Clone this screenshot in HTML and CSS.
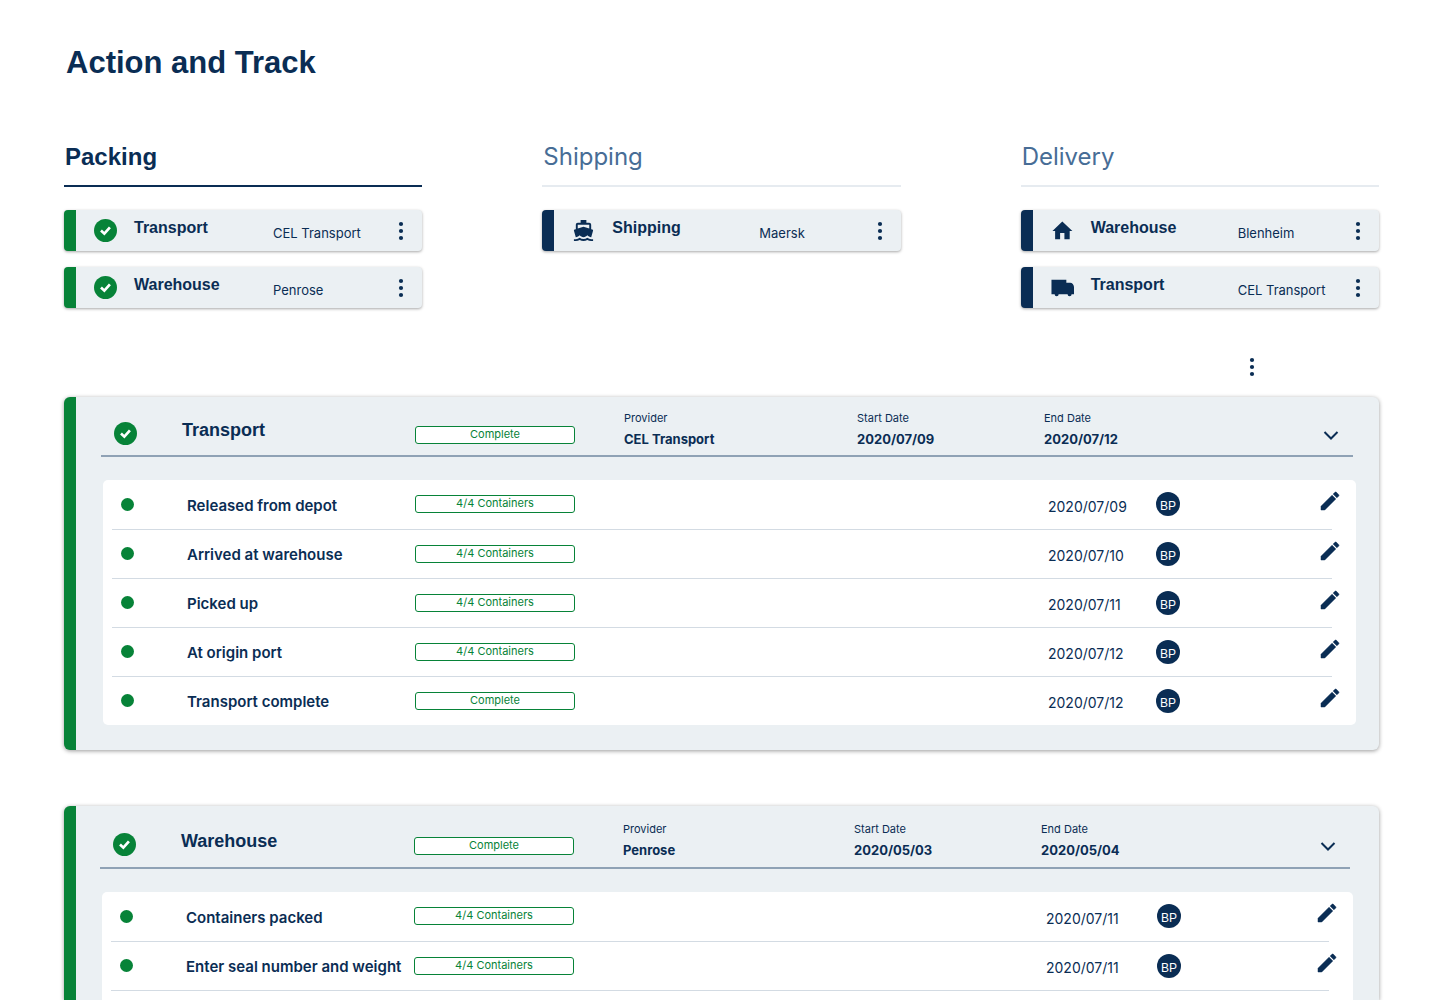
FILE: index.html
```html
<!DOCTYPE html>
<html lang="en">
<head>
  <meta charset="UTF-8" />
  <meta name="viewport" content="width=device-width, initial-scale=1.0"/>
  <title>Action and Track</title>
  <link rel="stylesheet" href="styles.css">
</head>
<body>

  <!-- icons -->
  <svg class="sprite" aria-hidden="true">
    <symbol id="check" viewBox="0 0 24 24">
      <circle cx="12" cy="12" r="12" fill="#078338"/>
      <path d="M7.3 12l3.5 3.3 5.8-6.6" fill="none" stroke="#fff" stroke-width="2.8"/>
    </symbol>
    <symbol id="dots" viewBox="0 0 6 20">
      <circle cx="3" cy="3" r="2.1"/><circle cx="3" cy="10" r="2.1"/><circle cx="3" cy="17" r="2.1"/>
    </symbol>
    <symbol id="boat" viewBox="0 0 24 24">
      <path d="M20 21c-1.39 0-2.78-.47-4-1.32-2.44 1.71-5.56 1.71-8 0C6.78 20.53 5.39 21 4 21H2v2h2c1.38 0 2.74-.35 4-.99 2.52 1.29 5.48 1.29 8 0 1.26.65 2.62.99 4 .99h2v-2h-2zM3.95 19H4c1.6 0 3.02-.88 4-2 .98 1.12 2.4 2 4 2s3.02-.88 4-2c.98 1.12 2.4 2 4 2h.05l1.89-6.68c.08-.26.06-.54-.06-.78s-.34-.42-.6-.5L20 10.62V6c0-1.1-.9-2-2-2h-3V1H9v3H6c-1.1 0-2 .9-2 2v4.62l-1.29.42c-.26.08-.48.26-.6.5s-.15.52-.06.78L3.95 19zM6 6h12v3.97L12 8 6 9.97V6z"/>
    </symbol>
    <symbol id="home" viewBox="0 0 24 24">
      <path d="M9.5 21v-6.5H14V21h5.5v-8.5h2.8L11.8 2.5 1.5 12.500h2.8V21z"/>
    </symbol>
    <symbol id="truck" viewBox="0 0 24 24">
      <path d="M.5 4H16v3h4c2 0 4 2 4 4.5V19h-2.5a2 2 0 0 1-4.200 0H8a2 2 0 0 1-4.200 0H.5z"/>
    </symbol>
    <symbol id="pen" viewBox="0 0 24 24">
      <path d="M3 17.25V21h3.75L17.81 9.94l-3.75-3.75L3 17.25zM20.71 7.04c.39-.39.39-1.02 0-1.41l-2.34-2.34c-.39-.39-1.02-.39-1.41 0l-1.83 1.83 3.75 3.75 1.83-1.83z" stroke="#0a2d54" stroke-width=".5"/>
    </symbol>
    <symbol id="chevron" viewBox="0 0 16 16">
      <path d="M1.5 5L8 11.500 14.500 5" fill="none" stroke="#0a2d54" stroke-width="2"/>
    </symbol>
  </svg>

  <h1>Action and Track</h1>

  <div class="phases">
    <section class="phase active">
      <h2>Packing</h2>
      <div class="card done">
        <svg class="icon"><use href="#check"/></svg>
        <h3>Transport</h3>
        <span class="company">CEL Transport</span>
        <button class="more" aria-label="More"><svg><use href="#dots"/></svg></button>
      </div>
      <div class="card done">
        <svg class="icon"><use href="#check"/></svg>
        <h3>Warehouse</h3>
        <span class="company">Penrose</span>
        <button class="more" aria-label="More"><svg><use href="#dots"/></svg></button>
      </div>
    </section>

    <section class="phase">
      <h2>Shipping</h2>
      <div class="card">
        <svg class="icon"><use href="#boat"/></svg>
        <h3>Shipping</h3>
        <span class="company">Maersk</span>
        <button class="more" aria-label="More"><svg><use href="#dots"/></svg></button>
      </div>
    </section>

    <section class="phase">
      <h2>Delivery</h2>
      <div class="card">
        <svg class="icon"><use href="#home"/></svg>
        <h3>Warehouse</h3>
        <span class="company">Blenheim</span>
        <button class="more" aria-label="More"><svg><use href="#dots"/></svg></button>
      </div>
      <div class="card">
        <svg class="icon"><use href="#truck"/></svg>
        <h3>Transport</h3>
        <span class="company">CEL Transport</span>
        <button class="more" aria-label="More"><svg><use href="#dots"/></svg></button>
      </div>
    </section>
  </div>

  <div class="toolbar">
    <button class="more" aria-label="More"><svg><use href="#dots"/></svg></button>
  </div>

  <section class="panel">
    <div class="panel-head">
      <svg class="icon"><use href="#check"/></svg>
      <h2>Transport</h2>
      <span class="badge">Complete</span>
      <div class="info"><span>Provider</span><strong>CEL Transport</strong></div>
      <div class="info"><span>Start Date</span><strong>2020/07/09</strong></div>
      <div class="info"><span>End Date</span><strong>2020/07/12</strong></div>
      <button class="toggle" aria-label="Collapse"><svg><use href="#chevron"/></svg></button>
    </div>
    <div class="steps">
      <table>
        <tr>
          <td class="state"><span class="dot"></span></td>
          <td class="name">Released from depot</td>
          <td><span class="badge">4/4 Containers</span></td>
          <td class="date">2020/07/09</td>
          <td class="user"><span class="avatar">BP</span></td>
          <td class="edit"><button aria-label="Edit"><svg><use href="#pen"/></svg></button></td>
        </tr>
        <tr>
          <td class="state"><span class="dot"></span></td>
          <td class="name">Arrived at warehouse</td>
          <td><span class="badge">4/4 Containers</span></td>
          <td class="date">2020/07/10</td>
          <td class="user"><span class="avatar">BP</span></td>
          <td class="edit"><button aria-label="Edit"><svg><use href="#pen"/></svg></button></td>
        </tr>
        <tr>
          <td class="state"><span class="dot"></span></td>
          <td class="name">Picked up</td>
          <td><span class="badge">4/4 Containers</span></td>
          <td class="date">2020/07/11</td>
          <td class="user"><span class="avatar">BP</span></td>
          <td class="edit"><button aria-label="Edit"><svg><use href="#pen"/></svg></button></td>
        </tr>
        <tr>
          <td class="state"><span class="dot"></span></td>
          <td class="name">At origin port</td>
          <td><span class="badge">4/4 Containers</span></td>
          <td class="date">2020/07/12</td>
          <td class="user"><span class="avatar">BP</span></td>
          <td class="edit"><button aria-label="Edit"><svg><use href="#pen"/></svg></button></td>
        </tr>
        <tr class="last">
          <td class="state"><span class="dot"></span></td>
          <td class="name">Transport complete</td>
          <td><span class="badge">Complete</span></td>
          <td class="date">2020/07/12</td>
          <td class="user"><span class="avatar">BP</span></td>
          <td class="edit"><button aria-label="Edit"><svg><use href="#pen"/></svg></button></td>
        </tr>
      </table>
    </div>
  </section>

  <section class="panel open">
    <div class="panel-head">
      <svg class="icon"><use href="#check"/></svg>
      <h2>Warehouse</h2>
      <span class="badge">Complete</span>
      <div class="info"><span>Provider</span><strong>Penrose</strong></div>
      <div class="info"><span>Start Date</span><strong>2020/05/03</strong></div>
      <div class="info"><span>End Date</span><strong>2020/05/04</strong></div>
      <button class="toggle" aria-label="Collapse"><svg><use href="#chevron"/></svg></button>
    </div>
    <div class="steps">
      <table>
        <tr>
          <td class="state"><span class="dot"></span></td>
          <td class="name">Containers packed</td>
          <td><span class="badge">4/4 Containers</span></td>
          <td class="date">2020/07/11</td>
          <td class="user"><span class="avatar">BP</span></td>
          <td class="edit"><button aria-label="Edit"><svg><use href="#pen"/></svg></button></td>
        </tr>
        <tr>
          <td class="state"><span class="dot"></span></td>
          <td class="name">Enter seal number and weight</td>
          <td><span class="badge">4/4 Containers</span></td>
          <td class="date">2020/07/11</td>
          <td class="user"><span class="avatar">BP</span></td>
          <td class="edit"><button aria-label="Edit"><svg><use href="#pen"/></svg></button></td>
        </tr>
      </table>
    </div>
  </section>

</body>
</html>
```
FILE: styles.css
```css
* {
  box-sizing: border-box;
}

body {
  font-family: "Liberation Sans", Arial, sans-serif;
  background: #fff;
  color: #0a2d54;
  margin: 0;
  min-height: 100vh;
  padding: 43px 61px 0 64px;
  display: flex;
  flex-direction: column;
}

h1, h2, h3 {
  margin: 0;
}

h1 {
  font-size: 31px;
  line-height: 40px;
  padding-left: 2px;
}

button {
  padding: 0;
  border: none;
  background: none;
  cursor: pointer;
}

svg {
  display: block;
  fill: #0a2d54;
}

.sprite {
  position: absolute;
  width: 0;
  height: 0;
}

.icon {
  width: 23px;
  height: 23px;
}

/* phases */
.phases {
  display: grid;
  grid-template-columns: repeat(3, 1fr);
  gap: 120px;
  margin-top: 59px;
}

.phase h2 {
  font-family: Inter, sans-serif;
  font-size: 24px;
  font-weight: 400;
  line-height: 30px;
  color: #476d96;
  padding: 0 0 13px 1px;
  border-bottom: 2px solid #e6ebf0;
  margin-bottom: 23px;
}

.phase.active h2 {
  font-family: "Liberation Sans", Arial, sans-serif;
  font-weight: 700;
  color: #0a2d54;
  border-color: #0a2d54;
}

.card {
  display: grid;
  grid-template-columns: 40px 147px 1fr 6px;
  align-items: center;
  height: 41px;
  margin-bottom: 16px;
  padding: 0 18px;
  border-left: 12px solid #0a2d54;
  border-radius: 4px;
  background: #ebf0f3;
  box-shadow: 0 1px 3px rgba(0, 0, 0, 0.35);
}

.card.done {
  grid-template-columns: 40px 139px 1fr 6px;
  border-color: #078338;
}

.card h3 {
  font-size: 16px;
  line-height: 20px;
  padding-bottom: 6px;
}

.company {
  font-family: Inter, sans-serif;
  font-size: 13px;
  line-height: 16px;
  padding-top: 4px;
}

.more svg {
  width: 6px;
  height: 20px;
}

.toolbar {
  display: flex;
  justify-content: flex-end;
  margin: 33px 124px 20px 0;
}

/* panels */
.panel {
  border-left: 12px solid #078338;
  border-radius: 6px;
  background: #ebf0f3;
  padding: 0 26px 25px 25px;
  box-shadow: 0 1px 4px rgba(0, 0, 0, 0.4);
}

.panel-head {
  display: grid;
  grid-template-columns: 81px 233px 209px 1fr 187px 279px 30px;
  align-items: center;
  height: 60px;
  padding-top: 12px;
  border-bottom: 2px solid #8fa2b5;
}

.panel-head .icon {
  margin: 0 0 4px 13px;
}

.panel-head h2 {
  font-size: 18px;
  line-height: 24px;
  padding-bottom: 10px;
}

.info {
  font-family: Inter, sans-serif;
  padding-bottom: 10px;
}

.info span {
  display: block;
  font-size: 11px;
  line-height: 18px;
}

.info strong {
  display: block;
  font-size: 13px;
  line-height: 24px;
}

.toggle svg {
  width: 16px;
  height: 16px;
}

.badge {
  display: block;
  width: 160px;
  height: 18px;
  border: 1px solid #078338;
  border-radius: 3px;
  background: #fff;
  color: #078338;
  font-family: Inter, sans-serif;
  font-size: 11px;
  line-height: 14px;
  text-align: center;
}

.steps {
  margin: 23px -3px 0 2px;
  padding: 0 24px 0 9px;
  background: #fff;
  border-radius: 5px;
}

table {
  width: 100%;
  border-collapse: collapse;
  table-layout: fixed;
}

td {
  height: 49px;
  padding: 0;
  border-bottom: 1px solid #d3dbe3;
}

.last td {
  border: none;
}

.state {
  width: 75px;
}

.dot {
  display: block;
  width: 13px;
  height: 13px;
  margin-left: 9px;
  border-radius: 50%;
  background: #078338;
}

.name {
  width: 228px;
  font-family: Inter, sans-serif;
  font-size: 15px;
  font-weight: 600;
  padding-top: 2px;
}

.date {
  width: 108px;
  font-family: Inter, sans-serif;
  font-size: 14px;
  padding-top: 4px;
}

.user {
  width: 106px;
}

.avatar {
  display: block;
  width: 24px;
  height: 24px;
  border-radius: 50%;
  background: #0a2d54;
  color: #fff;
  font-size: 12px;
  line-height: 29px;
  text-align: center;
}

.edit {
  width: 70px;
}

.edit button {
  display: block;
  margin: 0 -10px 6px auto;
}

.edit svg {
  width: 24px;
  height: 24px;
}

/* last panel runs on to the bottom of the page */
.panel.open {
  flex: 1;
  display: flex;
  flex-direction: column;
  margin-top: 56px;
  padding: 0 29px 0 24px;
  border-radius: 6px 6px 0 0;
}

.open .panel-head {
  height: 63px;
  padding-top: 14px;
}

.open .steps {
  flex: 1;
  border-radius: 5px 5px 0 0;
}

.open .date {
  width: 111px;
}

.open .user {
  width: 102px;
}
```
